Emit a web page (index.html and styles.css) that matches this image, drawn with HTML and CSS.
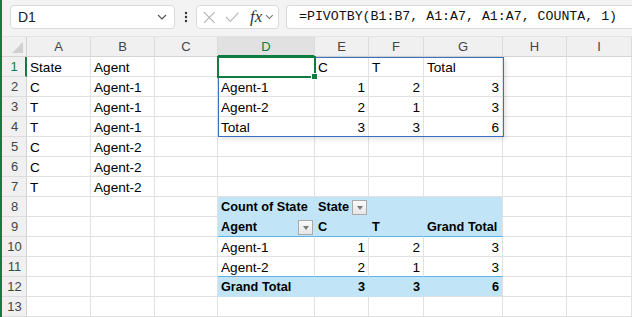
FILE: index.html
```html
<!DOCTYPE html>
<html lang="en">
<head>
    <meta charset="UTF-8">
    <title>PIVOTBY vs PivotTable</title>
    <link rel="stylesheet" href="styles.css">
</head>
<body>
    <!-- Formula bar -->
    <div class="topbar">
        <div class="namebox">
            <span>D1</span>
            <svg class="chev" width="10" height="6" viewBox="0 0 10 6"><path d="M1 1 L5 5 L9 1" fill="none" stroke="#555" stroke-width="1.2"/></svg>
        </div>
        <svg class="dots" width="4" height="12" viewBox="0 0 4 12"><circle cx="2" cy="2" r="1.2" fill="#333"/><circle cx="2" cy="6" r="1.2" fill="#333"/><circle cx="2" cy="10" r="1.2" fill="#333"/></svg>
        <div class="fnbox">
            <svg width="13" height="13" viewBox="0 0 13 13"><path d="M1 1 L12 12 M12 1 L1 12" stroke="#b0b0b0" stroke-width="1.1"/></svg>
            <svg width="15" height="12" viewBox="0 0 15 12"><path d="M1 6 L5.5 10.5 L14 1.5" fill="none" stroke="#b0b0b0" stroke-width="1.1"/></svg>
            <span class="fx">fx</span>
            <svg width="9" height="6" viewBox="0 0 9 6"><path d="M1 1 L4.5 4.5 L8 1" fill="none" stroke="#777" stroke-width="1.1"/></svg>
        </div>
        <div class="formula">=PIVOTBY(B1:B7, A1:A7, A1:A7, COUNTA, 1)</div>
    </div>

    <!-- Sheet grid -->
    <div class="sheet">
        <div class="corner"></div>
        <div class="ch">A</div><div class="ch">B</div><div class="ch">C</div><div class="ch ch-sel">D</div><div class="ch">E</div><div class="ch">F</div><div class="ch">G</div><div class="ch">H</div><div class="ch">I</div>

        <div class="rh rh-sel">1</div>
        <div class="c">State</div><div class="c">Agent</div><div class="c"></div><div class="c"></div><div class="c">C</div><div class="c">T</div><div class="c">Total</div><div class="c"></div><div class="c"></div>

        <div class="rh">2</div>
        <div class="c">C</div><div class="c">Agent-1</div><div class="c"></div><div class="c">Agent-1</div><div class="c n">1</div><div class="c n">2</div><div class="c n">3</div><div class="c"></div><div class="c"></div>

        <div class="rh">3</div>
        <div class="c">T</div><div class="c">Agent-1</div><div class="c"></div><div class="c">Agent-2</div><div class="c n">2</div><div class="c n">1</div><div class="c n">3</div><div class="c"></div><div class="c"></div>

        <div class="rh">4</div>
        <div class="c">T</div><div class="c">Agent-1</div><div class="c"></div><div class="c">Total</div><div class="c n">3</div><div class="c n">3</div><div class="c n">6</div><div class="c"></div><div class="c"></div>

        <div class="rh">5</div>
        <div class="c">C</div><div class="c">Agent-2</div><div class="c"></div><div class="c"></div><div class="c"></div><div class="c"></div><div class="c"></div><div class="c"></div><div class="c"></div>

        <div class="rh">6</div>
        <div class="c">C</div><div class="c">Agent-2</div><div class="c"></div><div class="c"></div><div class="c"></div><div class="c"></div><div class="c"></div><div class="c"></div><div class="c"></div>

        <div class="rh">7</div>
        <div class="c">T</div><div class="c">Agent-2</div><div class="c"></div><div class="c"></div><div class="c"></div><div class="c"></div><div class="c"></div><div class="c"></div><div class="c"></div>

        <div class="rh">8</div>
        <div class="c"></div><div class="c"></div><div class="c"></div>
        <div class="c pv b">Count of State</div>
        <div class="c pv b">State<span class="dd"></span></div>
        <div class="c pv"></div><div class="c pv pv-end"></div>
        <div class="c"></div><div class="c"></div>

        <div class="rh">9</div>
        <div class="c"></div><div class="c"></div><div class="c"></div>
        <div class="c pv pv-line b">Agent<span class="dd"></span></div>
        <div class="c pv pv-line b">C</div>
        <div class="c pv pv-line b">T</div>
        <div class="c pv pv-line pv-end b">Grand Total</div>
        <div class="c"></div><div class="c"></div>

        <div class="rh">10</div>
        <div class="c"></div><div class="c"></div><div class="c"></div>
        <div class="c">Agent-1</div><div class="c n">1</div><div class="c n">2</div><div class="c n">3</div>
        <div class="c"></div><div class="c"></div>

        <div class="rh">11</div>
        <div class="c"></div><div class="c"></div><div class="c"></div>
        <div class="c pv-top">Agent-2</div><div class="c n pv-top">2</div><div class="c n pv-top">1</div><div class="c n pv-top">3</div>
        <div class="c"></div><div class="c"></div>

        <div class="rh">12</div>
        <div class="c"></div><div class="c"></div><div class="c"></div>
        <div class="c pv b">Grand Total</div><div class="c pv n b">3</div><div class="c pv n b">3</div><div class="c pv pv-end pv-last n b">6</div>
        <div class="c"></div><div class="c"></div>

        <div class="rh">13</div>
        <div class="c"></div><div class="c"></div><div class="c"></div><div class="c"></div><div class="c"></div><div class="c"></div><div class="c"></div><div class="c"></div><div class="c"></div>

        <!-- overlays: spill range and active cell -->
        <div class="spill"></div>
        <div class="active"><span class="handle"></span></div>
    </div>
</body>
</html>
```

FILE: styles.css
```css
/* General */
body {
    margin: 0;
    width: 630px;
    height: 317px;
    overflow: hidden;
    border-left: 2px solid #107c41;
    background: #ffffff;
    font-family: "Liberation Sans", Arial, sans-serif;
    color: #000;
}

/* Formula bar */
.topbar {
    background: #f3f3f3;
    border-bottom: 1px solid #e3e3e3;
    display: flex;
    align-items: flex-start;
    padding: 5px 0 0 8px;
    box-sizing: border-box;
    height: 37px;
}

.namebox {
    width: 165px;
    height: 24px;
    box-sizing: border-box;
    background: #fff;
    border: 1px solid #dadada;
    border-radius: 4px;
    display: flex;
    align-items: center;
    justify-content: space-between;
    padding: 0 7px 0 7px;
    font-size: 14px;
    color: #222;
}

.dots {
    margin: 6px 8px 0 9px;
}

.fnbox {
    width: 83px;
    height: 24px;
    box-sizing: border-box;
    background: #fff;
    border: 1px solid #dadada;
    border-radius: 4px;
    display: flex;
    align-items: center;
    gap: 9px;
    padding: 0 4px 0 6px;
}

.fnbox .fx {
    font-family: "Liberation Serif", "Times New Roman", serif;
    font-style: italic;
    font-size: 17px;
    color: #333;
    margin-left: 2px;
    margin-right: -6px;
}

.formula {
    flex: 1;
    height: 24px;
    box-sizing: border-box;
    margin-left: 7px;
    background: #fff;
    border: 1px solid #dadada;
    border-right: none;
    border-radius: 4px 0 0 4px;
    padding-left: 12px;
    font-family: "Liberation Mono", "Courier New", monospace;
    font-size: 13.25px;
    line-height: 22px;
    color: #111;
    white-space: nowrap;
}

/* Sheet */
.sheet {
    position: relative;
    display: grid;
    grid-template-columns: 25px 64px 64px 63px 97px 54px 55px 79px 64px 65px;
    grid-auto-rows: 20px;
}

.sheet > div {
    box-sizing: border-box;
}

.corner {
    background: #f0f0f0;
    border-right: 1px solid #d4d4d4;
    border-bottom: 1px solid #d4d4d4;
    position: relative;
}

.corner::after {
    content: "";
    position: absolute;
    right: 3px;
    bottom: 3px;
    border-left: 11px solid transparent;
    border-bottom: 11px solid #d0d0d0;
}

.ch {
    background: #f0f0f0;
    border-right: 1px solid #dcdcdc;
    border-bottom: 1px solid #d4d4d4;
    color: #444;
    font-size: 13px;
    display: flex;
    align-items: center;
    justify-content: center;
}

.ch-sel {
    background: #e1e1e1;
    color: #107c41;
    border-bottom: 2px solid #107c41;
}

.rh {
    background: #f0f0f0;
    border-right: 1px solid #d4d4d4;
    border-bottom: 1px solid #dcdcdc;
    color: #444;
    font-size: 13px;
    display: flex;
    align-items: center;
    justify-content: center;
    padding-left: 1px;
}

.rh-sel {
    color: #107c41;
    border-right: 2px solid #107c41;
}

.c {
    border-right: 1px solid #e1e1e1;
    border-bottom: 1px solid #e1e1e1;
    padding: 1px 3px 0 3px;
    font-size: 13.6px;
    display: flex;
    align-items: center;
    white-space: nowrap;
    overflow: hidden;
}

.c.n {
    justify-content: flex-end;
}

.c.b {
    font-weight: bold;
    font-size: 12.7px;
}

/* PivotTable style */
.pv {
    background: #c1e5f6;
    border-right-color: #c1e5f6;
    border-bottom-color: #c1e5f6;
}

.pv-end {
    border-right-color: #e1e1e1;
}

.pv-line {
    border-bottom-color: #5bb4e3;
}

.pv-top {
    border-bottom-color: #5bb4e3;
}

.pv-last {
    border-bottom-color: #e1e1e1;
}

.dd {
    margin-left: auto;
    margin-right: -2px;
    flex-shrink: 0;
    width: 15px;
    height: 15px;
    box-sizing: border-box;
    border: 1px solid #a9a9a9;
    background: linear-gradient(#fafafa, #e6e6e6);
    position: relative;
}

.dd::after {
    content: "";
    position: absolute;
    left: 3.5px;
    top: 5px;
    border-left: 3.5px solid transparent;
    border-right: 3.5px solid transparent;
    border-top: 4px solid #7a7a7a;
}

/* Overlays */
.spill {
    position: absolute;
    left: 216px;
    top: 20px;
    width: 286px;
    height: 80px;
    border: 1px solid #3c6ec2;
    box-sizing: border-box;
    box-shadow: 2px 2px 5px rgba(0, 0, 0, 0.12);
    pointer-events: none;
}

.active {
    position: absolute;
    left: 215px;
    top: 19px;
    width: 99px;
    height: 22px;
    border: 2px solid #107c41;
    box-sizing: border-box;
    pointer-events: none;
}

.handle {
    position: absolute;
    right: -4px;
    bottom: -4px;
    width: 5px;
    height: 5px;
    background: #107c41;
    border: 1px solid #fff;
}
```
